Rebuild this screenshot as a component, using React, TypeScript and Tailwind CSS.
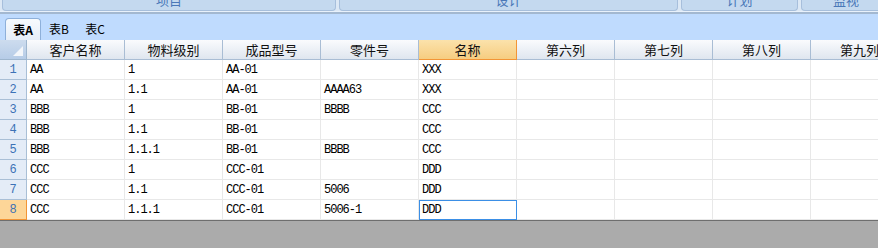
import React from "react"

const columns = ["客户名称", "物料级别", "成品型号", "零件号", "名称", "第六列", "第七列", "第八列", "第九列"]

const rows: string[][] = [
  ["AA", "1", "AA-01", "", "XXX"],
  ["AA", "1.1", "AA-01", "AAAA63", "XXX"],
  ["BBB", "1", "BB-01", "BBBB", "CCC"],
  ["BBB", "1.1", "BB-01", "", "CCC"],
  ["BBB", "1.1.1", "BB-01", "BBBB", "CCC"],
  ["CCC", "1", "CCC-01", "", "DDD"],
  ["CCC", "1.1", "CCC-01", "5006", "DDD"],
  ["CCC", "1.1.1", "CCC-01", "5006-1", "DDD"],
]

const cjk = "font-['Noto_Sans_CJK_SC',sans-serif]"
const mono = "font-['Liberation_Mono','Noto_Sans_CJK_SC',monospace]"

function TopButton({ label, className }: { label: string; className: string }) {
  return (
    <div
      className={`h-[11px] shrink-0 overflow-hidden rounded-b-[4px] border border-t-0 border-[#a7bfdc] bg-[#c4d9ef] ${className}`}
    >
      <div className={`-mt-[7px] text-center text-[13px] leading-[13px] text-[#4a78b8] ${cjk}`}>{label}</div>
    </div>
  )
}

export default function App() {
  const selectedRow = 7
  const selectedCol = 4

  return (
    <div className="w-[878px] h-[248px] overflow-hidden bg-[#ababab]">
      {/* Ribbon buttons, cut at top */}
      <div className="flex h-[11px] gap-[3px] bg-[#dce8f5] pl-[2px]">
        <TopButton label="项目" className="w-[334px]" />
        <TopButton label="设计" className="w-[339px]" />
        <TopButton label="计划" className="w-[117px]" />
        <TopButton label="监视" className="w-[90px]" />
      </div>
      <div className="h-[3px] border-t border-[#e8f1fb] bg-[#a3b8d0]" />

      {/* Sheet tabs */}
      <div className="flex h-[26px] items-end bg-[#bfdbfe] pl-[5px]">
        <div
          className={`flex h-[22px] w-[36px] items-center justify-center rounded-t-[4px] border border-b-0 border-[#8eb0da] bg-gradient-to-b from-[#f7fafd] to-[#e6eef8] text-[12px] font-bold text-black ${cjk}`}
        >
          表A
        </div>
        <div className={`flex h-[22px] w-[36px] items-center justify-center text-[12px] text-black ${cjk}`}>表B</div>
        <div className={`flex h-[22px] w-[36px] items-center justify-center text-[12px] text-black ${cjk}`}>表C</div>
      </div>

      {/* Grid */}
      <div className="w-[878px] overflow-hidden bg-white">
        <div className="flex h-[20px] w-[909px]">
          <div className="relative h-[20px] w-[27px] shrink-0 border-r border-b border-[#9eb6ce] bg-gradient-to-b from-[#cddcee] to-[#b6cce7]">
            <svg className="absolute right-[3px] bottom-[3px]" width="10" height="10" viewBox="0 0 10 10">
              <polygon points="10,0 10,10 0,10" fill="#f3f6fa" />
            </svg>
          </div>
          {columns.map((c, i) => (
            <div
              key={c}
              className={`flex h-[20px] w-[98px] shrink-0 items-center justify-center border-r border-b text-[13px] text-[#111] ${cjk} ${
                i === selectedCol
                  ? "border-[#f29536] bg-gradient-to-b from-[#fbe2ab] to-[#f6cd80]"
                  : "border-[#a9bdd4] bg-gradient-to-b from-[#fafbfd] to-[#dfe6ef]"
              }`}
            >
              {c}
            </div>
          ))}
        </div>

        {rows.map((r, ri) => (
          <div key={ri} className="flex h-[20px] w-[909px]">
            <div
              className={`flex h-[20px] w-[27px] shrink-0 items-center justify-center border-r border-b text-[12px] text-[#3c72b6] ${mono} ${
                ri === selectedRow ? "border-[#f29536] bg-[#fdd698]" : "border-[#a9bfd6] bg-[#e4ecf7]"
              }`}
            >
              {ri + 1}
            </div>
            {columns.map((_, ci) => {
              const selected = ri === selectedRow && ci === selectedCol
              return (
                <div
                  key={ci}
                  className={`flex h-[20px] w-[98px] shrink-0 items-center border-r border-b border-[#e8e8e8] pl-[3px] text-[12px] tracking-[-1px] text-black ${mono} ${
                    selected ? "outline outline-1 -outline-offset-1 outline-[#3b8fe6]" : ""
                  }`}
                >
                  {r[ci] ?? ""}
                </div>
              )
            })}
          </div>
        ))}
      </div>
      <div className="h-[1px] bg-[#6e6e6e]" />
    </div>
  )
}
